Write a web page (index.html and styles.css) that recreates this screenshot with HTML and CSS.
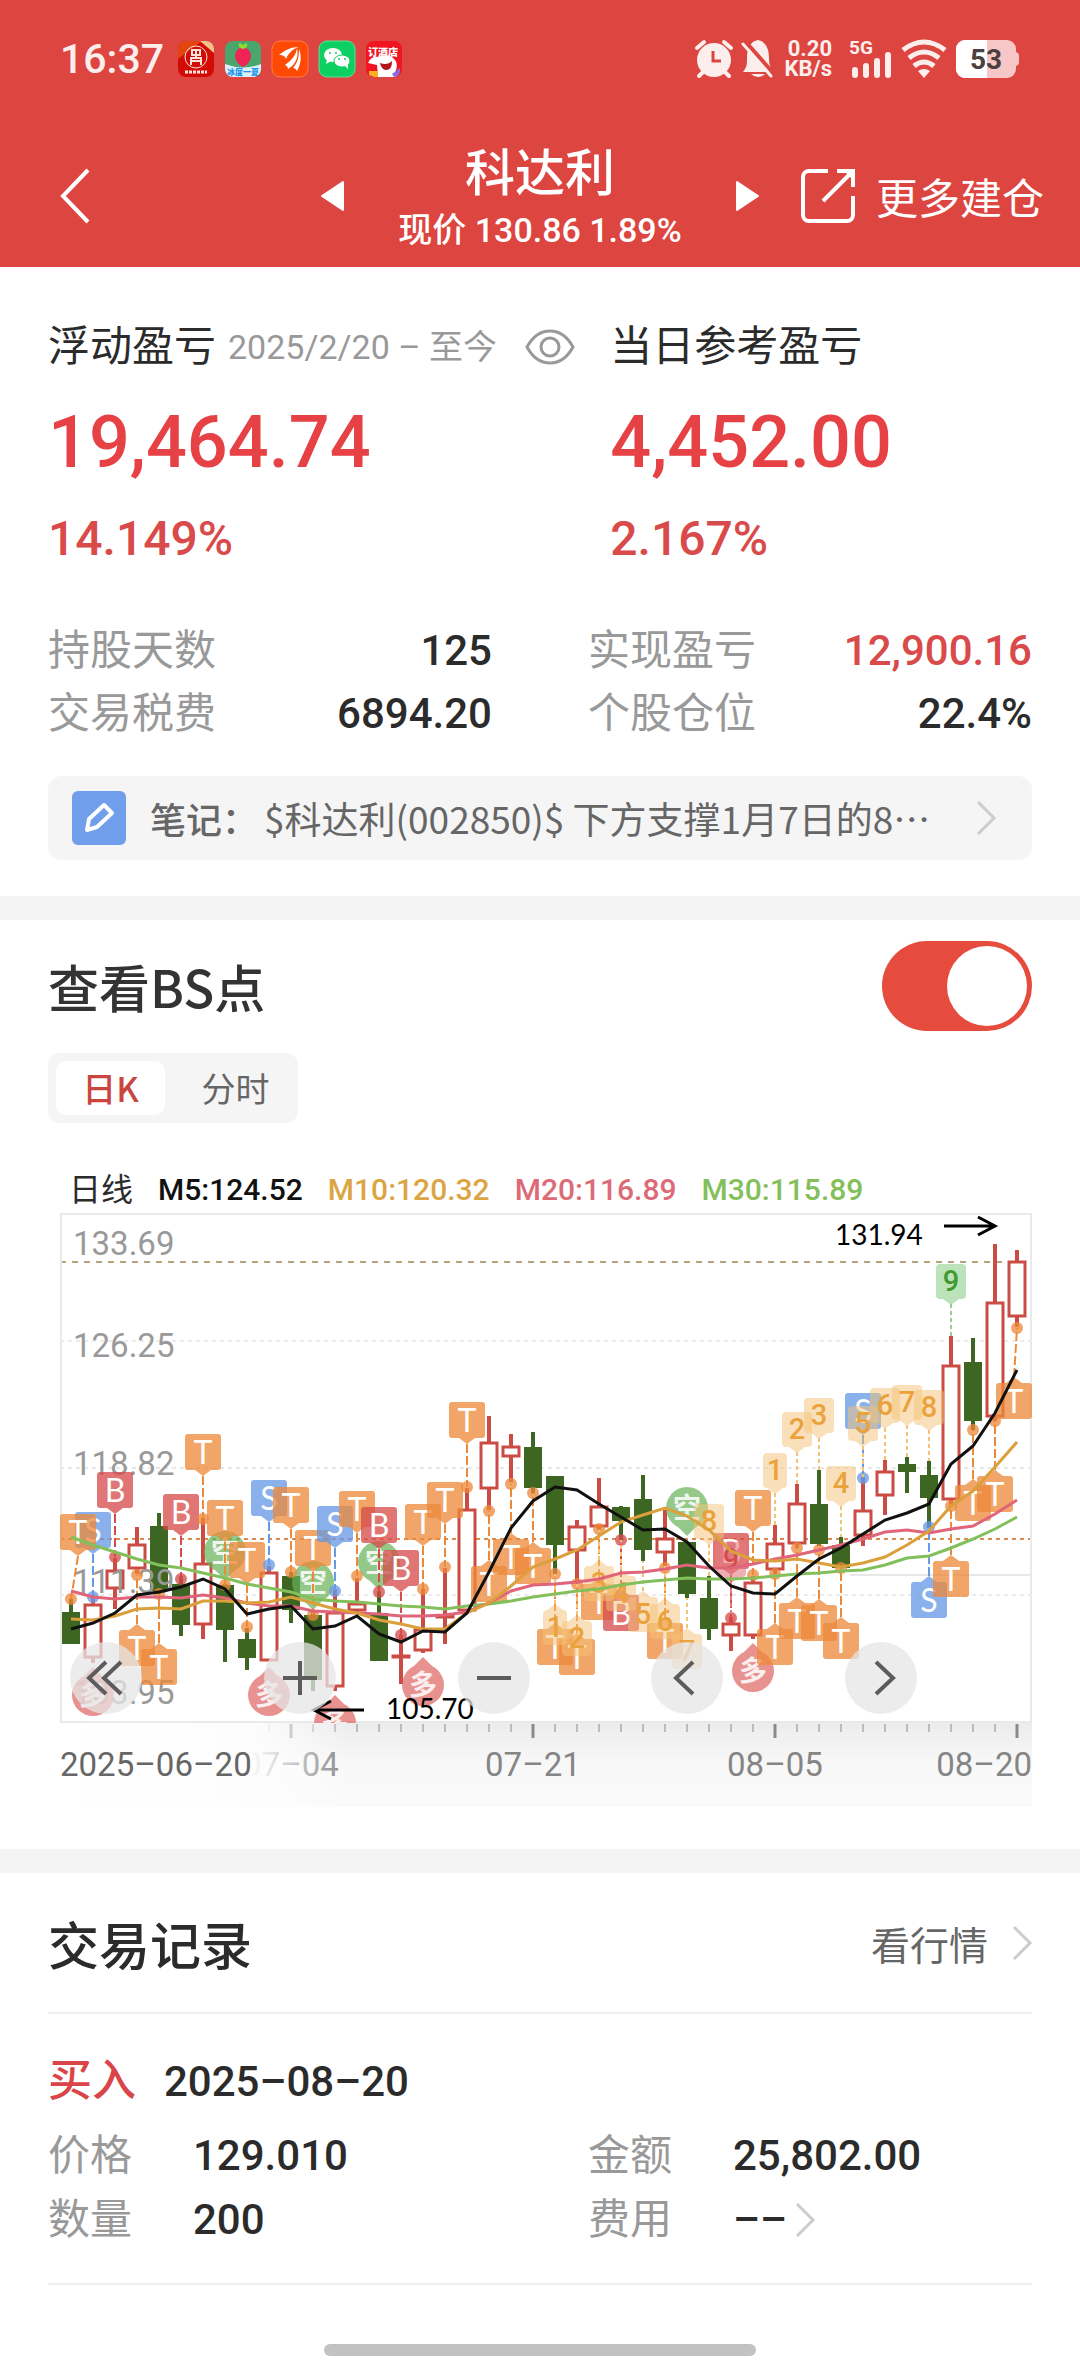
FILE: index.html
```html
<!DOCTYPE html>
<html lang="zh-CN">
<head>
    <meta charset="UTF-8">
    <meta name="viewport" content="width=device-width, initial-scale=1.0">
    <title>科达利 - 持仓详情</title>
    <link rel="stylesheet" href="styles.css">
</head>
<body>
    <header class="header">
        <div class="status-bar">
            <span class="status-time">16:37</span>
            <div class="app-icons">
                <svg viewBox="0 0 36 36"><rect width="36" height="36" rx="8" fill="#d30b05"/><path d="M0 18V8a8 8 0 0 1 8-8h16z" fill="#e2450f"/><path d="M22 0h6a8 8 0 0 1 8 8v4z" fill="#f3c28a"/><circle cx="18" cy="16" r="11" fill="none" stroke="#fbe3dc" stroke-width="1"/><path d="M14 9h8v5h-8zM13 24v-7h10v7M14 20h8M18 8v9" fill="none" stroke="#fbe3dc" stroke-width="2"/><path d="M7 31h22" stroke="#fbe3dc" stroke-width="3" stroke-dasharray="3 1"/></svg>
                <svg viewBox="0 0 36 36"><rect width="36" height="36" rx="8" fill="#4aa66c"/><path d="M0 23q18 7 36 0v5a8 8 0 0 1-8 8H8a8 8 0 0 1-8-8z" fill="#dcf1fc"/><path d="M18 6c12 3 9 16 0 20-9-4-12-17 0-20z" fill="#ee2456"/><path d="M18 8c-5-1-5-5-3-6l3 2 3-2c2 1 2 5-3 6z" fill="#8fdc2f"/><text x="18" y="34" class="app-text" fill="#1c93ea">冰度一夏</text></svg>
                <svg viewBox="0 0 36 36"><rect width="36" height="36" rx="8" fill="#ff4a05" stroke="#ff7b4b"/><path d="M7 14c6-5 12-8 20-8-6 2-10 5-13 12-1-3-3-4-7-4z" fill="#fff"/><path d="M13 24c7-5 11-10 12-17 2 9-1 16-9 21 0-2-1-3-3-4z" fill="#fff"/><path d="M27 8c3 8 2 15-2 22-1-2-2-3-4-3 5-6 6-11 6-19z" fill="#fff"/></svg>
                <svg viewBox="0 0 36 36"><rect width="36" height="36" rx="8" fill="#0cd062" stroke="#5ce097"/><ellipse cx="14" cy="14" rx="9" ry="7" fill="#fff"/><path d="M8 18l-1 5 5-3z" fill="#fff"/><ellipse cx="23" cy="20" rx="8" ry="6" fill="#fff" stroke="#0cd062"/><path d="M26 25l3 3v-5z" fill="#fff"/><g fill="#0cd062"><circle cx="11" cy="12" r="1"/><circle cx="17" cy="12" r="1"/><circle cx="20" cy="18" r="1"/><circle cx="26" cy="18" r="1"/></g></svg>
                <svg viewBox="0 0 36 36"><rect width="36" height="36" rx="8" fill="#f01520"/><path d="M2 22c2-5 6-7 10-6 6-3 14-2 17 3 3 4 2 10-1 14l2 3H10c3-4 1-8 1-12z" fill="#fff"/><path d="M14 22c5 2 9 1 12-2 0 6-2 9-6 9-3 0-5-3-6-7z" fill="#b3131b"/><path d="M3 34v-4h9v6H8z" fill="#f6b022"/><path d="M26 33l8-6v3a6 6 0 0 1-6 6z" fill="#8d6bd8"/><text x="17" y="15" class="app-text app-text-big" fill="#fff">订酒店</text></svg>
            </div>
            <div class="status-icons">
                <svg class="icon-alarm" viewBox="0 0 38 38"><circle cx="19" cy="20" r="17" fill="#fdeeee"/><path d="M2 8l7-6M36 8l-7-6M4 36l5-5M34 36l-5-5" stroke="#fdeeee" stroke-width="4" stroke-linecap="round"/><path d="M18 11v10h8" fill="none" stroke="#dd4540" stroke-width="3"/></svg>
                <svg class="icon-bell" viewBox="0 0 32 38"><path d="M1 32c4-5 4-8 4-14C5 8 9 1 16 0c7 1 11 8 11 18 0 6 1 9 4 14z" fill="#fdeeee"/><path d="M9 34h14q-7 6-14 0z" fill="#fdeeee"/><path d="M3 1l29 33" stroke="#dd4540" stroke-width="4"/><path d="M1 4l28 32" stroke="#fdeeee" stroke-width="3" stroke-linecap="round"/></svg>
                <span class="net-speed">0.20<br>KB/s</span>
                <svg class="icon-signal" viewBox="0 0 43 38"><text x="0" y="14" class="signal-text">5G</text><path d="M6 30v5M17 26v9M28 21v14M39 15v20" stroke="#fdeeee" stroke-width="6" stroke-linecap="round"/></svg>
                <svg class="icon-wifi" viewBox="0 0 46 38"><g fill="none" stroke="#fdeeee" stroke-width="5"><path d="M2 10q21-16 42 0"/><path d="M8 18q15-12 30 0"/><path d="M13 26q10-8 20 0"/></g><path d="M17 31q6-4 12 0l-6 7z" fill="#fdeeee"/></svg>
                <svg class="icon-battery" viewBox="0 0 64 38"><rect width="60" height="38" rx="9" fill="#f7c6c6"/><path d="M60 12q3 1 3 4v6q0 3-3 4z" fill="#f7c6c6"/><path d="M31 0v38H9a9 9 0 0 1-9-9V9a9 9 0 0 1 9-9z" fill="#fff"/><text x="30" y="29" class="battery-text">53</text></svg>
            </div>
        </div>
        <nav class="nav">
            <button class="back-button" aria-label="返回"><svg viewBox="0 0 30 56" width="30" height="56"><path d="M28 2L3 28l25 26" fill="none" stroke="#fff" stroke-width="4"/></svg></button>
            <div class="stock-switcher">
                <button aria-label="上一只"><svg viewBox="0 0 24 30" width="24" height="30"><path d="M1 15L22 1v28z" fill="#fff" stroke="#fff" stroke-width="2" stroke-linejoin="round"/></svg></button>
                <div class="stock">
                    <h1>科达利</h1>
                    <p>现价 130.86 1.89%</p>
                </div>
                <button aria-label="下一只"><svg viewBox="0 0 24 30" width="24" height="30"><path d="M23 15L2 1v28z" fill="#fff" stroke="#fff" stroke-width="2" stroke-linejoin="round"/></svg></button>
            </div>
            <a href="#" class="more-link">
                <svg viewBox="0 0 54 54" width="54" height="54"><g fill="none" stroke="#fff" stroke-width="4"><path d="M27 2H8a6 6 0 0 0-6 6v38a6 6 0 0 0 6 6h38a6 6 0 0 0 6-6V27"/><path d="M36 2h16v16M51 3L22 32"/></g><path d="M44 3h8v8z" fill="#fff"/></svg>
                更多建仓
            </a>
        </nav>
    </header>

    <section class="summary">
        <div class="profit-row">
            <div class="profit">
                <h2>浮动盈亏 <small>2025/2/20 – 至今</small>
                    <button class="eye-button" aria-label="隐藏金额"><svg viewBox="0 0 50 36" width="50" height="36"><g fill="none" stroke="#999" stroke-width="3"><path d="M2 18C8 7 16 2 25 2s17 5 23 16c-6 11-14 16-23 16S8 29 2 18z"/><circle cx="25" cy="18" r="9"/></g></svg></button>
                </h2>
                <p class="amount">19,464.74</p>
                <p class="percent">14.149%</p>
            </div>
            <div class="profit">
                <h2>当日参考盈亏</h2>
                <p class="amount">4,452.00</p>
                <p class="percent">2.167%</p>
            </div>
        </div>
        <dl class="stats">
            <div><dt>持股天数</dt><dd>125</dd></div>
            <div><dt>实现盈亏</dt><dd class="up">12,900.16</dd></div>
            <div><dt>交易税费</dt><dd>6894.20</dd></div>
            <div><dt>个股仓位</dt><dd>22.4%</dd></div>
        </dl>
        <a href="#" class="note">
            <span class="note-icon"><svg viewBox="0 0 54 54" width="54" height="54"><path d="M15 39l2-11 15-14 8 8-15 14z" fill="none" stroke="#fff" stroke-width="4" stroke-linejoin="round"/></svg></span>
            <span class="note-label">笔记：</span>
            <span class="note-text">$科达利(002850)$ 下方支撑1月7日的8…</span>
            <svg class="chevron" viewBox="0 0 20 36"><path d="M2 2l16 16L2 34"/></svg>
        </a>
    </section>

    <section class="chart-section">
        <div class="section-head">
            <label for="bsSwitch">查看BS点</label>
            <input type="checkbox" id="bsSwitch" class="switch" checked>
        </div>
        <div class="tabs">
            <button class="tab active">日K</button>
            <button class="tab">分时</button>
        </div>
        <div class="legend">
            <span class="legend-name">日线</span>
            <span class="m5">M5:124.52</span>
            <span class="m10">M10:120.32</span>
            <span class="m20">M20:116.89</span>
            <span class="m30">M30:115.89</span>
        </div>
        <div class="chart">
            <svg id="kline" viewBox="0 0 972 593"></svg>
            <div class="chart-controls">
                <button aria-label="最早"><svg viewBox="0 0 72 72"><path d="M36 20L19 36l17 16M51 20L34 36l17 16"/></svg></button>
                <button aria-label="放大"><svg viewBox="0 0 72 72"><path d="M19 36h34M36 19v34"/></svg></button>
                <button aria-label="缩小"><svg viewBox="0 0 72 72"><path d="M19 36h34"/></svg></button>
                <button aria-label="向左"><svg viewBox="0 0 72 72"><path d="M42 20L25 36l17 16"/></svg></button>
                <button aria-label="向右"><svg viewBox="0 0 72 72"><path d="M31 20l17 16-17 16"/></svg></button>
            </div>
        </div>
    </section>

    <section class="records">
        <div class="records-head">
            <h2>交易记录</h2>
            <a href="#">看行情 <svg class="chevron" viewBox="0 0 20 36"><path d="M2 2l16 16L2 34"/></svg></a>
        </div>
        <article class="record">
            <h3><span class="side">买入</span>2025–08–20</h3>
            <dl class="record-fields">
                <div><dt>价格</dt><dd>129.010</dd></div>
                <div><dt>金额</dt><dd>25,802.00</dd></div>
                <div><dt>数量</dt><dd>200</dd></div>
                <div><dt>费用</dt><dd>–– <svg class="chevron" viewBox="0 0 20 36"><path d="M2 2l16 16L2 34"/></svg></dd></div>
            </dl>
        </article>
    </section>
    <div class="home-bar"></div>

    <script src="chart.js"></script>
</body>
</html>
```

FILE: styles.css
```css
* {
    margin: 0;
    padding: 0;
    box-sizing: border-box;
}

body {
    font-family: Roboto, "Noto Sans CJK SC", sans-serif;
    background-color: #fff;
    color: #2b2b2b;
}

button {
    border: none;
    background: none;
    font-family: inherit;
    cursor: pointer;
}

a {
    color: inherit;
    text-decoration: none;
}

svg {
    display: block;
    flex-shrink: 0;
    overflow: visible;
}

.chevron {
    width: 20px;
    height: 36px;
    fill: none;
    stroke: #ccc;
    stroke-width: 3;
}

/* 顶部 */
.header {
    background-color: #dd4540;
    color: #fff;
}

.status-bar {
    display: flex;
    align-items: center;
    height: 118px;
    padding: 0 60px;
}

.status-time {
    font-size: 41px;
    font-weight: 500;
    color: #fdeeee;
    margin-right: 14px;
}

.app-icons {
    display: flex;
    gap: 11px;
}

.app-icons svg {
    width: 36px;
    height: 36px;
}

.app-text {
    font-size: 8px;
    font-weight: 900;
    text-anchor: middle;
}

.app-text-big {
    font-size: 10px;
}

.status-icons {
    display: flex;
    align-items: center;
    gap: 9px;
    margin-left: auto;
}

.icon-alarm {
    width: 38px;
    height: 38px;
}

.icon-bell {
    width: 32px;
    height: 38px;
}

.net-speed {
    width: 49px;
    margin-right: 8px;
    font-size: 22px;
    font-weight: 700;
    line-height: 20px;
    text-align: right;
    color: #fdeeee;
}

.icon-signal {
    width: 43px;
    height: 38px;
}

.signal-text {
    font-size: 19px;
    font-weight: 700;
    fill: #fdeeee;
}

.icon-wifi {
    width: 46px;
    height: 38px;
}

.icon-battery {
    width: 64px;
    height: 38px;
}

.battery-text {
    font-size: 28px;
    font-weight: 700;
    text-anchor: middle;
    fill: #4a4040;
}

.nav {
    display: grid;
    grid-template-columns: 1fr 438px 1fr;
    align-items: center;
    height: 149px;
    padding: 6px 36px 0;
}

.back-button {
    justify-self: start;
    padding: 0 24px;
}

.stock-switcher {
    display: flex;
    align-items: center;
    justify-content: space-between;
}

.stock {
    padding-top: 8px;
    text-align: center;
}

.stock h1 {
    font-size: 50px;
    font-weight: 500;
    line-height: 60px;
}

.stock p {
    font-size: 34px;
    font-weight: 500;
    line-height: 52px;
}

.more-link {
    display: flex;
    align-items: center;
    justify-content: flex-end;
    gap: 21px;
    font-size: 42px;
    white-space: nowrap;
}

/* 盈亏 */
.summary {
    padding: 52px 48px 36px;
}

.profit-row {
    display: grid;
    grid-template-columns: 4fr 3fr;
}

.profit h2 {
    display: flex;
    align-items: center;
    font-size: 42px;
    font-weight: 400;
    line-height: 56px;
    white-space: nowrap;
}

.profit small {
    margin-left: 12px;
    font-size: 34px;
    color: #999;
}

.eye-button {
    margin-left: 28px;
}

.amount {
    margin-top: 26px;
    font-size: 72px;
    font-weight: 500;
    line-height: 84px;
    color: #e64144;
}

.percent {
    margin-top: 26px;
    font-size: 48px;
    font-weight: 500;
    line-height: 56px;
    color: #d94a4a;
}

.stats {
    display: grid;
    grid-template-columns: 1fr 1fr;
    column-gap: 96px;
    margin-top: 52px;
    font-size: 42px;
    line-height: 63px;
}

.stats div {
    display: flex;
    justify-content: space-between;
}

dt {
    color: #999;
}

dd {
    font-weight: 500;
}

.up {
    color: #d94a4a;
}

.note {
    display: flex;
    align-items: center;
    height: 84px;
    margin-top: 31px;
    padding: 0 36px 0 24px;
    border-radius: 14px;
    background-color: #f5f5f5;
    font-family: "Noto Sans CJK SC", sans-serif;
    font-size: 36px;
    color: #666;
}

.note-icon {
    border-radius: 6px;
    background-color: #719eea;
}

.note-label {
    margin-left: 24px;
    font-weight: 500;
}

.note-text {
    flex: 1;
    margin-left: 6px;
    overflow: hidden;
    font-size: 37px;
    white-space: nowrap;
}

/* K线 */
.chart-section {
    padding: 21px 48px 42px;
    border-top: 24px solid #f4f4f4;
}

.section-head {
    display: flex;
    align-items: center;
    justify-content: space-between;
    font-family: "Noto Sans CJK SC", sans-serif;
    font-size: 51px;
    font-weight: 500;
    color: #333;
}

.switch {
    appearance: none;
    width: 150px;
    height: 90px;
    padding: 5px;
    border-radius: 45px;
    background-color: #ccc;
}

.switch::before {
    content: "";
    display: block;
    width: 80px;
    height: 80px;
    border-radius: 50%;
    background-color: #fff;
}

.switch:checked {
    background-color: #e64c3e;
}

.switch:checked::before {
    margin-left: auto;
}

.tabs {
    display: flex;
    gap: 16px;
    width: fit-content;
    margin-top: 22px;
    padding: 8px;
    border-radius: 12px;
    background-color: #f5f5f5;
}

.tab {
    width: 109px;
    height: 54px;
    border-radius: 10px;
    font-family: "Noto Sans CJK SC", sans-serif;
    font-size: 34px;
    line-height: 54px;
    color: #666;
}

.tab.active {
    background-color: #fff;
    font-weight: 500;
    color: #c9453f;
}

.legend {
    display: flex;
    gap: 25px;
    margin: 47px 0 4px 21px;
    font-size: 30px;
    font-weight: 500;
    line-height: 40px;
}

.legend-name {
    font-size: 32px;
    font-weight: 400;
}

.m5 { color: #111; }
.m10 { color: #dba544; }
.m20 { color: #dc6b77; }
.m30 { color: #83c05b; }

.chart {
    position: relative;
    margin-left: 12px;
}

.chart > svg {
    width: 100%;
    height: auto;
}

.chart-controls {
    position: absolute;
    top: 428px;
    left: 10px;
    right: 115px;
    display: flex;
    justify-content: space-between;
}

.chart-controls button {
    width: 72px;
    height: 72px;
    border-radius: 50%;
    background-color: rgba(230, 230, 230, 0.75);
}

.chart-controls path {
    fill: none;
    stroke: #5c5c5c;
    stroke-width: 4;
}

.frame {
    fill: none;
    stroke: #eaeaea;
    stroke-width: 2;
}

.axis {
    font-size: 33px;
    fill: #999;
}

.axis-date {
    fill: #858585;
}

.axis-start {
    fill: #666;
}

.peak {
    font-family: Lato, sans-serif;
    font-size: 28px;
    fill: #000;
}

.badge-text {
    font-family: Lato, "Noto Sans CJK SC", sans-serif;
    font-size: 32px;
    text-anchor: middle;
    fill: #fff;
}

.signal-mark {
    font-size: 28px;
    font-weight: 700;
    opacity: 0.85;
}

.count-text {
    font-size: 29px;
    font-weight: 500;
    text-anchor: middle;
}

/* 交易记录 */
.records {
    padding: 0 48px;
    border-top: 24px solid #f4f4f4;
}

.records-head {
    display: flex;
    align-items: center;
    justify-content: space-between;
    height: 141px;
    border-bottom: 2px solid #eee;
}

.records-head h2 {
    font-size: 51px;
    font-weight: 500;
}

.records-head a {
    display: flex;
    align-items: center;
    gap: 24px;
    font-size: 39px;
    color: #666;
}

.record {
    padding: 37px 0 31px;
    border-bottom: 2px solid #eee;
}

.record h3 {
    font-size: 42px;
    font-weight: 500;
    line-height: 60px;
}

.side {
    margin-right: 28px;
    font-size: 44px;
    color: #d94548;
}

.record-fields {
    display: grid;
    grid-template-columns: 1fr 1fr;
    column-gap: 96px;
    margin-top: 12px;
    font-size: 42px;
    line-height: 64px;
}

.record-fields div {
    display: grid;
    grid-template-columns: 145px 1fr;
}

.record-fields dd {
    display: flex;
    align-items: center;
    gap: 8px;
}

.home-bar {
    width: 40%;
    height: 12px;
    margin: 59px auto 16px;
    border-radius: 6px;
    background-color: #c2c2c2;
}
```

FILE: chart.js
```js
const STEP = 22;
const FIRST = 11;
const WIDTH = 972;
const PLOT = 508;

// [涨跌, 最高, 实体上沿, 实体下沿, 最低]
const candles = [
    ['g', 385, 398, 430, 430], ['r', 383, 390, 444, 449], ['r', 344, 356, 375, 395], ['r', 313, 330, 355, 360],
    ['g', 299, 312, 377, 380], ['g', 362, 370, 411, 422], ['r', 304, 349, 411, 425], ['g', 370, 371, 416, 448],
    ['g', 414, 425, 444, 456], ['r', 352, 358, 447, 447], ['g', 358, 362, 396, 409], ['g', 397, 401, 466, 477],
    ['r', 375, 398, 473, 477], ['r', 364, 389, 397, 398], ['g', 377, 399, 447, 447], ['r', 421, 441, 443, 470],
    ['r', 375, 415, 437, 439], ['r', 354, 401, 404, 430], ['r', 274, 295, 397, 397], ['r', 202, 228, 275, 296],
    ['r', 220, 232, 243, 268], ['g', 218, 233, 274, 279], ['g', 262, 262, 331, 360], ['r', 306, 312, 337, 370],
    ['r', 264, 292, 313, 316], ['g', 292, 293, 307, 326], ['g', 261, 285, 336, 347], ['r', 296, 324, 339, 352],
    ['g', 328, 328, 380, 384], ['g', 362, 384, 415, 426], ['r', 403, 409, 422, 437], ['r', 362, 368, 422, 425],
    ['r', 311, 329, 356, 360], ['r', 270, 289, 330, 334], ['g', 256, 290, 330, 332], ['g', 323, 331, 354, 354],
    ['r', 263, 296, 322, 332], ['r', 246, 257, 282, 301], ['g', 243, 250, 258, 279], ['g', 247, 261, 284, 314],
    ['r', 122, 151, 286, 292], ['g', 124, 148, 207, 216], ['r', 30, 88, 203, 207], ['r', 36, 47, 103, 113]
];

const averages = [
    { color: '#83c05b', y: [323, 331, 338, 345, 351, 354, 359, 364, 370, 374, 378, 385, 387, 388, 390, 392, 393, 395, 392, 390, 387, 383, 380, 377, 375, 371, 368, 366, 364, 365, 365, 364, 362, 360, 359, 357, 356, 351, 344, 342, 334, 325, 315, 303] },
    { color: '#e0647a', y: [377, 383, 385, 383, 383, 384, 381, 384, 389, 392, 392, 397, 398, 399, 400, 402, 402, 401, 398, 389, 377, 371, 370, 368, 365, 359, 358, 355, 351, 354, 354, 350, 345, 341, 336, 331, 325, 318, 316, 319, 315, 312, 300, 286] },
    { color: '#dba03c', y: [405, 406, 402, 395, 394, 395, 387, 387, 389, 388, 383, 389, 395, 399, 406, 410, 415, 415, 399, 389, 372, 353, 345, 336, 322, 308, 301, 294, 302, 316, 337, 346, 347, 345, 349, 353, 349, 343, 331, 317, 292, 277, 253, 228] },
    { color: '#111', y: [415, 409, 399, 381, 378, 373, 365, 375, 400, 395, 392, 415, 412, 402, 420, 428, 417, 418, 399, 358, 314, 287, 273, 276, 290, 303, 316, 315, 328, 352, 372, 379, 380, 362, 345, 334, 320, 306, 299, 290, 250, 232, 199, 156] }
];

// 买卖点: [第几根, 标记, 方向(-1在上 1在下), 圆点位置]
const trades = [
    [1, 'S', -1, 383], [0, 'T', -1, 385], [2, 'B', -1, 343], [3, 'T', 1, 361], [4, 'T', 1, 380], [5, 'B', -1, 365],
    [6, 'T', -1, 305], [7, 'T', -1, 371], [8, 'T', -1, 413], [9, 'S', -1, 351], [10, 'T', -1, 358],
    [11, 'T', -1, 401], [12, 'S', -1, 377], [13, 'T', -1, 362], [14, 'B', -1, 378], [15, 'B', -1, 421],
    [16, 'T', -1, 375], [17, 'T', -1, 353], [18, 'T', -1, 273], [19, 'T', 1, 297], [20, 'T', 1, 270],
    [21, 'T', 1, 279], [22, 'T', 1, 360], [23, 'T', 1, 370], [24, 'T', 1, 315], [25, 'B', 1, 326],
    [27, 'T', 1, 354], [30, 'B', -1, 404], [31, 'T', -1, 361], [32, 'T', 1, 360], [33, 'T', 1, 334],
    [34, 'T', 1, 336], [35, 'T', 1, 354], [36, 'S', -1, 264], [39, 'S', 1, 313], [40, 'T', 1, 292],
    [41, 'T', 1, 216], [42, 'T', 1, 207], [43, 'T', 1, 114]
];
const tradeColors = { T: '#ed893a', S: '#6699e6', B: '#d64c4a' };

// 九转: [第几根, 数字, 方向, 方框上沿]
const counts = [
    [22, 1, 1, 396], [23, 2, 1, 407], [24, 3, 1, 352], [25, 4, 1, 362], [26, 5, 1, 383], [27, 6, 1, 390],
    [28, 7, 1, 420], [29, 8, -1, 290], [30, 9, -1, 328, '#d64c4a'],
    [32, 1, -1, 239], [33, 2, -1, 198], [34, 3, -1, 184], [35, 4, -1, 252], [36, 5, -1, 192],
    [37, 6, -1, 174], [38, 7, -1, 171], [39, 8, -1, 176], [40, 9, -1, 50, '#3f9b30']
];

// 多空: [第几根, 文字, 圆心]
const signals = [
    [7, '空', 338], [11, '空', 368], [14, '空', 348], [28, '空', 294],
    [1, '多', 481], [9, '多', 481], [12, '多', 509], [16, '多', 471], [31, '多', 457]
];

const x = i => FIRST + i * STEP;
const line = (x1, y1, x2, y2, color, width, dash) =>
    `<line x1="${x1}" y1="${y1}" x2="${x2}" y2="${y2}" stroke="${color}" stroke-width="${width}" stroke-dasharray="${dash || 'none'}"/>`;

function drawGrid() {
    return line(0, 127, WIDTH, 127, '#d8d8d8', 1, '4 4')
        + line(0, 254, WIDTH, 254, '#e8e8e8', 2, '4 4')
        + line(0, 381, WIDTH, 381, '#d8d8d8', 1, '4 4')
        + line(790, 361, WIDTH, 361, '#e8e8e8', 2)
        + line(0, 48, WIDTH, 48, '#b8a27c', 2, '6 6')
        + line(0, 325, WIDTH, 325, '#dc8a4c', 2, '4 4')
        + `<rect class="frame" x="1" y="0" width="${WIDTH - 2}" height="${PLOT}"/>`;
}

function drawCandle([type, high, top, bottom, low], i) {
    if (type === 'g') {
        return line(x(i), high, x(i), low, '#3d6622', 4)
            + `<rect x="${x(i) - 9}" y="${top}" width="18" height="${bottom - top}" fill="#3d6622"/>`;
    }
    return line(x(i), high, x(i), top, '#cb4c45', 4)
        + line(x(i), bottom, x(i), low, '#cb4c45', 4)
        + `<rect x="${x(i) - 8}" y="${top + 1}" width="16" height="${Math.max(bottom - top - 2, 1)}" fill="#fff" stroke="#cb4c45" stroke-width="3"/>`;
}

function pointer(cx, top, height, dir) {
    const edge = dir < 0 ? top + height : top;
    return `M${cx - 8} ${edge}L${cx} ${edge - dir * 6}L${cx + 8} ${edge}z`;
}

function drawTrade([i, mark, dir, dot]) {
    const color = tradeColors[mark];
    const cx = Math.min(Math.max(x(i), 18), WIDTH - 18);
    const top = dir < 0 ? dot - 85 : dot + 55;
    const edge = dir < 0 ? top + 42 : top - 6;
    return line(cx, edge, x(i), dot, color, 2, '9 3')
        + `<g fill="${color}" opacity="0.76"><circle cx="${x(i)}" cy="${dot}" r="6"/>`
        + `<rect x="${cx - 18}" y="${top}" width="36" height="36" rx="3"/><path d="${pointer(cx, top, 36, dir)}"/></g>`
        + `<text class="badge-text" x="${cx}" y="${top + 30}">${mark}</text>`;
}

function drawCount([i, n, dir, top, color]) {
    const half = n === 1 ? 12 : 15;
    const end = dir < 0 ? candles[i][1] : candles[i][4];
    const fill = { '#3f9b30': '#8fd08b', '#d64c4a': '#e57a80' }[color] || '#f5c377';
    return line(x(i), dir < 0 ? top + 40 : top - 6, x(i), end, fill, 2, '4 3')
        + `<g fill="${fill}" opacity="${color ? 0.6 : 0.5}"><rect x="${x(i) - half}" y="${top}" width="${half * 2}" height="35" rx="4"/><path d="${pointer(x(i), top, 35, dir)}"/></g>`
        + `<text class="count-text" x="${x(i)}" y="${top + 27}" fill="${color || '#eba23c'}">${n}</text>`;
}

function drawSignal([i, word, cy]) {
    const long = word === '多';
    const dir = long ? -1 : 1;
    return `<g fill="${long ? '#df6462' : '#67b257'}" opacity="0.7"><circle cx="${x(i)}" cy="${cy}" r="21"/>`
        + `<path d="M${x(i) - 9} ${cy + dir * 19}L${x(i)} ${cy + dir * 28}L${x(i) + 9} ${cy + dir * 19}z"/></g>`
        + `<text class="badge-text signal-mark" x="${x(i)}" y="${cy + 10}">${word}</text>`;
}

function drawAxis() {
    let out = `<rect y="${PLOT + 1}" width="${WIDTH}" height="84" fill="url(#axisShade)"/>`;
    for (let i = 9; i < candles.length; i++) {
        const major = (i - 10) % 11 === 0;
        out += line(x(i), 510, x(i), major ? 524 : 518, '#8a8a8a', major ? 3 : 1);
    }
    out += '<text class="axis axis-date" x="231" y="562" text-anchor="middle">07–04</text>'
        + '<text class="axis axis-date" x="473" y="562" text-anchor="middle">07–21</text>'
        + '<text class="axis axis-date" x="715" y="562" text-anchor="middle">08–05</text>'
        + '<text class="axis axis-date" x="972" y="562" text-anchor="end">08–20</text>'
        + `<rect y="${PLOT + 1}" width="290" height="84" fill="url(#axisFade)"/>`
        + '<text class="axis axis-start" x="0" y="562">2025–06–20</text>';
    return out;
}

const labels = [['133.69', 41], ['126.25', 143], ['118.82', 261], ['111.39', 379], ['103.95', 490]];

document.getElementById('kline').innerHTML = `
    <defs>
        <clipPath id="plotClip"><rect width="${WIDTH}" height="${PLOT + 1}"/></clipPath>
        <linearGradient id="axisShade" x1="0" y1="0" x2="0" y2="1">
            <stop offset="0" stop-color="#ececec"/><stop offset="0.5" stop-color="#f8f8f8"/><stop offset="1" stop-color="#fafafa"/>
        </linearGradient>
        <linearGradient id="axisFade">
            <stop offset="0" stop-color="#fff"/><stop offset="0.65" stop-color="#fdfdfd"/><stop offset="1" stop-color="#fff" stop-opacity="0"/>
        </linearGradient>
    </defs>
    ${drawGrid()}
    <g clip-path="url(#plotClip)">
        ${candles.map(drawCandle).join('')}
        ${labels.map(([text, y]) => `<text class="axis" x="13" y="${y}">${text}</text>`).join('')}
        ${signals.map(drawSignal).join('')}
        ${trades.map(drawTrade).join('')}
        ${counts.map(drawCount).join('')}
        ${averages.map(a => `<polyline fill="none" stroke="${a.color}" stroke-width="3" points="${a.y.map((y, i) => x(i) + ',' + y).join(' ')}"/>`).join('')}
    </g>
    <text class="peak" x="775" y="31">131.94</text>
    <path d="M884 12h50M918 3l17 9-17 9" fill="none" stroke="#000" stroke-width="3"/>
    <text class="peak" x="326" y="505">105.70</text>
    <path d="M304 496h-50M271 487l-17 9 17 9" fill="none" stroke="#000" stroke-width="3"/>
    ${drawAxis()}`;
```
